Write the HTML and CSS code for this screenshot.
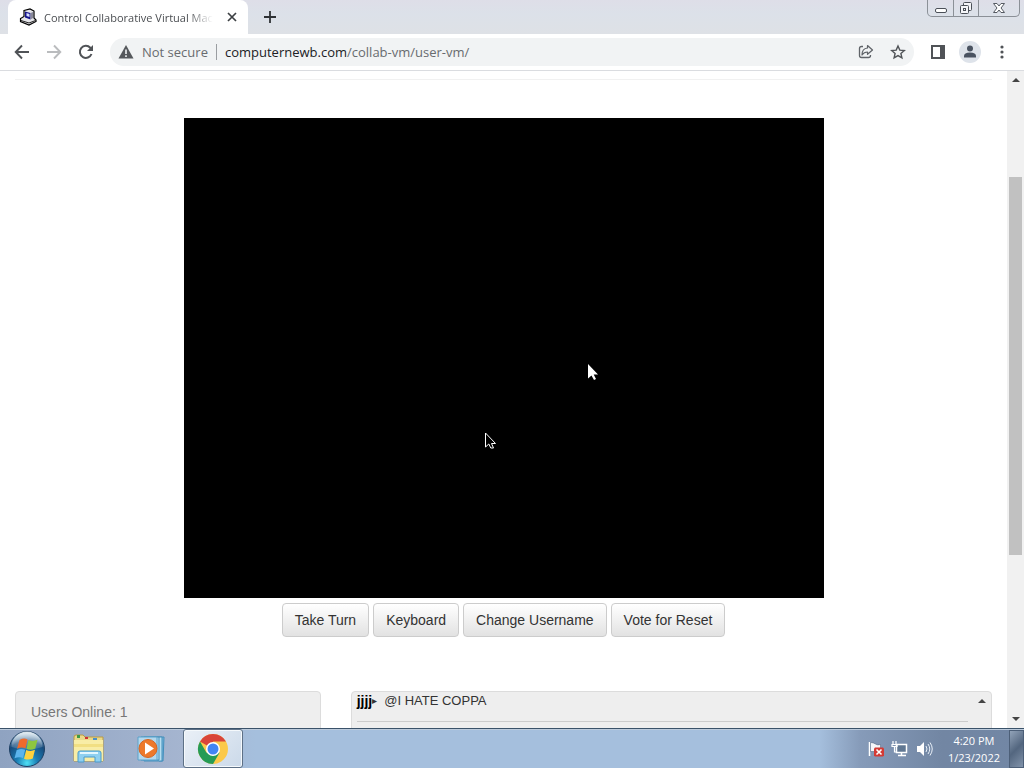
FILE: index.html
```
<!DOCTYPE html>
<html lang="en">
<head>
  <meta charset="UTF-8">
  <meta name="viewport" content="width=device-width, initial-scale=1.0">
  <title>Control Collaborative Virtual Machines</title>
  <link rel="stylesheet" href="styles.css">
</head>
<body>

  <header class="tab-strip">
    <div class="tab">
      <svg class="favicon" width="18" height="18" viewBox="0 0 18 18">
        <path d="M5 2.500 11 1l4 2v7l2 2v1.500l-7 3.500-8.500-3.500v-3l3.500-2z" fill="#e6e6ea" stroke="#000" stroke-width="1.200"/>
        <path d="M6 3.500l5.500 1.500v6.500l-5.500-2z" fill="#14148c"/>
        <path d="M7.500 5l3 1v3l-3-1z" fill="#d5dcff"/>
        <path d="M11.500 5 14 4v6l-2.500 1.500z" fill="#88889a"/>
        <path d="M2 12.500l8 2.500 6.500-2.500" fill="none" stroke="#222"/>
      </svg>
      <span class="tab-title">Control Collaborative Virtual Mac</span>
      <button class="tab-close" aria-label="Close tab">
        <svg width="10" height="10" viewBox="0 0 10 10"><path d="M1 1l8 8M9 1l-8 8" stroke="#3c4043" stroke-width="1.700"/></svg>
      </button>
    </div>
    <button class="new-tab" aria-label="New tab">
      <svg width="12" height="12" viewBox="0 0 12 12"><path d="M6 0v12M0 6h12" stroke="#2f3235" stroke-width="1.800"/></svg>
    </button>
    <div class="window-controls">
      <button class="win-btn" aria-label="Minimize">
        <svg width="14" height="14" viewBox="0 0 14 14"><rect x="1.500" y="7.500" width="11" height="4" rx="1.500" fill="#fff" stroke="#4b5058"/></svg>
      </button>
      <button class="win-btn" aria-label="Restore">
        <svg width="14" height="14" viewBox="0 0 14 14"><g fill="#f4f5f8" stroke="#4b5058"><rect x="4.500" y="1.500" width="8" height="8" rx="1"/><rect x="1.500" y="4.500" width="8" height="8" rx="1"/><rect x="4.500" y="7.500" width="2" height="2"/></g></svg>
      </button>
      <button class="win-btn win-close" aria-label="Close">
        <svg width="14" height="14" viewBox="0 0 14 14"><path d="M1.500 2.500h3.500l2 2.500 2-2.500h3.500l-3.500 4.500 3.500 4.500h-3.500l-2-2.500-2 2.500h-3.500l3.500-4.500z" fill="#fff" stroke="#555a62"/></svg>
      </button>
    </div>
  </header>

  <nav class="toolbar">
    <button class="nav-btn" aria-label="Back">
      <svg width="16" height="16" viewBox="0 0 16 16"><path d="M15 8H2M8 1.500 1.700 8 8 14.500" fill="none" stroke="#505357" stroke-width="1.900"/></svg>
    </button>
    <button class="nav-btn" aria-label="Forward">
      <svg width="16" height="16" viewBox="0 0 16 16"><path d="M1 8h13M8 1.500 14.300 8 8 14.500" fill="none" stroke="#babcbe" stroke-width="1.900"/></svg>
    </button>
    <button class="nav-btn" aria-label="Reload">
      <svg width="16" height="16" viewBox="0 0 16 16"><path d="M13.500 10A6 6 0 1 1 12.300 3.800L14 5.500" fill="none" stroke="#505357" stroke-width="2"/><path d="M15 1v6H9z" fill="#505357"/></svg>
    </button>
    <div class="address-bar">
      <svg class="warning" width="16" height="14" viewBox="0 0 16 14"><path d="M8 0l7.500 13.500H.5z" fill="#55585c"/><path d="M8 4.500V9M8 10.200V12" stroke="#f1f3f4" stroke-width="1.600"/></svg>
      <span class="security">Not secure</span>
      <span class="url"><b>computernewb.com</b>/collab-vm/user-vm/</span>
      <button class="bar-btn" aria-label="Share this page">
        <svg width="16" height="16" viewBox="0 0 16 16"><path d="M5 2.500H3.500q-2 0-2 2v7q0 2 2 2h7q2 0 2-2V11" fill="none" stroke="#5f6368" stroke-width="1.300"/><path d="M9.500 1.500l5 4.500-5 4.300V8Q6 8 4 11q0-6.500 5.500-7z" fill="none" stroke="#5f6368" stroke-width="1.200" stroke-linejoin="round"/></svg>
      </button>
      <button class="bar-btn" aria-label="Bookmark this tab">
        <svg width="16" height="16" viewBox="0 0 16 16"><path d="M8 2l1.800 4.100 4.500.4-3.400 3 1 4.400L8 11.600l-3.900 2.300 1-4.400-3.400-3 4.500-.4z" fill="none" stroke="#505357" stroke-width="1.400"/></svg>
      </button>
    </div>
    <button class="bar-btn" aria-label="Side panel">
      <svg width="16" height="16" viewBox="0 0 16 16"><path d="M1 1h14v14H1zM3 3v10h7V3z" fill="#505357" fill-rule="evenodd"/></svg>
    </button>
    <button class="bar-btn profile" aria-label="Profile">
      <svg width="22" height="22" viewBox="0 0 22 22"><circle cx="11" cy="11" r="11" fill="#dee3ea"/><circle cx="11" cy="7.500" r="3" fill="#4a5361"/><path d="M5 16.500v-1.500q0-3.500 6-3.500t6 3.500v1.500z" fill="#4a5361"/></svg>
    </button>
    <button class="bar-btn" aria-label="Menu">
      <svg width="16" height="16" viewBox="0 0 16 16" fill="#505357"><circle cx="8" cy="3" r="1.600"/><circle cx="8" cy="8" r="1.600"/><circle cx="8" cy="13" r="1.600"/></svg>
    </button>
  </nav>

  <div class="viewport">
    <main class="page">
      <hr class="divider">

      <div class="display">
        <svg class="cursor cursor-remote" width="12" height="18" viewBox="0 0 12 18"><path d="M1 0v14.500l3.500-3 2.500 4.500 2-1-2.300-4.500H11z" fill="#fff"/></svg>
        <svg class="cursor cursor-local" width="12" height="18" viewBox="0 0 12 18"><path d="M.5 1v14l3.300-3 2 4h2.700l-2-4.500h4z" fill="#000" stroke="#fff"/></svg>
      </div>

      <div class="actions">
        <button class="btn">Take Turn</button>
        <button class="btn">Keyboard</button>
        <button class="btn">Change Username</button>
        <button class="btn">Vote for Reset</button>
      </div>

      <div class="row">
        <div class="col-users">
          <section class="panel users">Users Online: 1</section>
        </div>
        <div class="col-chat">
          <section class="panel chat">
            <div class="chat-log">
              <p class="chat-message"><b>jjjj</b><span class="marker">▸</span><span>@I HATE COPPA</span></p>
            </div>
            <span class="arrow-up"></span>
          </section>
        </div>
      </div>
    </main>
    <div class="scrollbar">
      <span class="arrow-up"></span>
      <div class="track"><div class="thumb"></div></div>
      <span class="arrow-down"></span>
    </div>
  </div>

  <footer class="taskbar">
    <button class="start" aria-label="Start">
      <svg width="38" height="38" viewBox="0 0 38 38">
        <defs>
          <radialGradient id="orb" cx="50%" cy="90%" r="85%">
            <stop offset="0" stop-color="#4fe0f5"/>
            <stop offset=".35" stop-color="#1a7db4"/>
            <stop offset=".75" stop-color="#174b7c"/>
            <stop offset="1" stop-color="#8fb4cf"/>
          </radialGradient>
          <linearGradient id="gloss" x2="0" y2="1">
            <stop offset="0" stop-color="#fff" stop-opacity=".75"/>
            <stop offset="1" stop-color="#fff" stop-opacity=".1"/>
          </linearGradient>
        </defs>
        <circle cx="19" cy="19" r="17.500" fill="url(#orb)" stroke="#1d3f63"/>
        <path d="M3.500 17a15.500 15.500 0 0 1 31 0q-15.500 5-31 0z" fill="url(#gloss)"/>
        <path d="M11.500 10q4.500-2.500 8-.5l-2 9q-4-2-8.500.3z" fill="#ee6a2c"/>
        <path d="M20.500 10q4.500 2 9-.2l-2.200 8.700q-4.500 2.200-8.800.3z" fill="#8dc63f"/>
        <path d="M8.700 20q4.500-2 8.500-.3l-2.200 8.300q-4-1.800-8.500.3z" fill="#5bb4ec"/>
        <path d="M18.200 20q4.500 2 8.800-.2l-2.200 8.700q-4.300 2-8.800.2z" fill="#fdd23e"/>
      </svg>
    </button>
    <button class="task" aria-label="Windows Explorer">
      <svg width="34" height="30" viewBox="0 0 34 30">
        <path d="M2 3q0-2 2-2h7l2 2h18v24H2z" fill="#ead98a" stroke="#b99b45"/>
        <path d="M5 1h3v3H5z" fill="#3c9a45"/><path d="M13 3h3v2h-3z" fill="#c33"/><path d="M21 4h4v3h-4z" fill="#4a90c8"/>
        <path d="M2 6h29v21H2z" fill="#f8eda6"/><path d="M2 10h29v3H2z" fill="#f1df83"/>
        <path d="M6 28V19q0-2 2-2h19q2 0 2 2v9h-6v-5H12v5z" fill="#8fd0f0" stroke="#489bcc"/>
        <path d="M8 19h18" stroke="#e2f7ff" stroke-width="2"/>
      </svg>
    </button>
    <button class="task" aria-label="Windows Media Player">
      <svg width="30" height="28" viewBox="0 0 30 28">
        <path d="M8 2h20l-1 24H8z" fill="#7dbadd" stroke="#428ebb"/>
        <path d="M5 2h18v23H5zM23 2h3v24h-3" fill="#b8def0" stroke="#428ebb"/>
        <path d="M2 2h19v23H2z" fill="#b4d8ed" stroke="#5aa2cb"/>
        <circle cx="12" cy="13.500" r="9" fill="#ed792b" stroke="#d56521"/>
        <path d="M9 7.500v12l9-6z" fill="#fff"/>
      </svg>
    </button>
    <button class="task task-active" aria-label="Google Chrome">
      <svg width="32" height="32" viewBox="0 0 32 32">
        <circle cx="16" cy="16" r="15" fill="#fbc94a"/>
        <path d="M16 16 3 8.500A15 15 0 0 1 29 8.500H16z" fill="#d9453a"/>
        <path d="M3 8.500A15 15 0 0 0 16 31l6.500-11.300L16 16 9.500 19.700z" fill="#259b56"/>
        <circle cx="16" cy="16" r="7" fill="#fff"/>
        <circle cx="16" cy="16" r="5.500" fill="#4285f4"/>
      </svg>
    </button>
    <div class="tray">
      <svg width="18" height="18" viewBox="0 0 18 18">
        <path d="M2.500 2v14" stroke="#fff" stroke-width="1.500"/><path d="M3.500 2.500q3 0 5 1.500t5 .5v7H3.500z" fill="#f5f7fa" stroke="#4b5f79" stroke-width=".5"/>
        <path d="M8 7.500h8l1 1v7l-1 1H8l-1-1v-7z" fill="#d33b35"/><path d="M9.500 9.500l5 5M14.500 9.500l-5 5" stroke="#fff" stroke-width="1.600"/>
      </svg>
      <svg width="18" height="18" viewBox="0 0 18 18">
        <path d="M5.500 4.500h10v8h-10z" fill="#607792" stroke="#fff" stroke-width="1.500"/><path d="M7 15.500h8M10.500 13v2" stroke="#fff" stroke-width="1.500"/>
        <path d="M2 1v3M5 1v3M1 4.500h5v2H1zM3.500 7v5H6" fill="none" stroke="#fff" stroke-width="1.200"/>
      </svg>
      <svg width="18" height="18" viewBox="0 0 18 18">
        <path d="M2 6h3l4-4v14l-4-4H2z" fill="#fff"/><path d="M11 6q2 3 0 6M13 4q3.500 5 0 10M15 2.500q4.500 6.500 0 13" fill="none" stroke="#e9f0f8"/>
      </svg>
    </div>
    <time class="clock" datetime="2022-01-23T16:20">4:20 PM<br>1/23/2022</time>
    <button class="show-desktop" aria-label="Show desktop"></button>
  </footer>

</body>
</html>
```

FILE: styles.css
```
* {
  box-sizing: border-box;
}

body {
  margin: 0;
  height: 100vh;
  display: flex;
  flex-direction: column;
  overflow: hidden;
  background: #fff;
  font-family: "Open Sans", "Noto Sans", sans-serif;
}

button {
  padding: 0;
  border: none;
  background: none;
  font: inherit;
}

svg {
  display: block;
  flex: none;
}

/* Tab strip */
.tab-strip {
  display: flex;
  flex: none;
  height: 34px;
  padding-left: 8px;
  background: linear-gradient(#dedee8, #dce1e9 40%, #dee1e6);
}

.tab {
  display: flex;
  align-items: center;
  width: 240px;
  padding: 0 10px 0 11px;
  background: #fff;
  border-radius: 8px 8px 0 0;
}

.tab-title {
  margin: 0 auto 0 7px;
  white-space: nowrap;
  font-size: 11px;
  color: #4b4e52;
  -webkit-mask-image: linear-gradient(to right, #000 85%, transparent);
  mask-image: linear-gradient(to right, #000 85%, transparent);
}

.tab-close {
  padding: 1px;
}

.new-tab {
  padding: 0 16px;
}

.window-controls {
  display: flex;
  height: 17px;
  margin: 0 4px 0 auto;
  border: 1px solid #8b9097;
  border-top: none;
  border-radius: 0 0 5px 5px;
}

.win-btn {
  display: flex;
  align-items: center;
  justify-content: center;
  width: 25px;
}

.win-btn + .win-btn {
  border-left: 1px solid #8b9097;
}

.win-btn.win-close {
  width: 41px;
}

/* Toolbar */
.toolbar {
  display: flex;
  align-items: center;
  flex: none;
  height: 37px;
  padding: 0 14px;
  gap: 16px;
  border-bottom: 1px solid #dadce0;
}

.address-bar {
  display: flex;
  align-items: center;
  flex: 1;
  height: 28px;
  padding: 0 8px;
  gap: 16px;
  border-radius: 14px;
  background: #f1f3f4;
  font-size: 13px;
  color: #686b6f;
}

.security {
  margin-left: -8px;
  padding-right: 8px;
  border-right: 1px solid #9a9da1;
  line-height: 16px;
}

.url {
  flex: 1;
  margin-left: -8px;
}

.url b {
  font-weight: normal;
  color: #202124;
}

.profile {
  margin: 0 -3px;
}

/* Page */
.viewport {
  display: flex;
  flex: 1;
  min-height: 0;
}

.page {
  flex: 1;
  padding: 8px 15px 0;
  overflow: hidden;
  font-family: "Liberation Sans", Arial, sans-serif;
  font-size: 14px;
  line-height: 20px;
}

.divider {
  margin: 0 0 38px;
  border: none;
  border-top: 1px solid #f1f1f1;
}

.display {
  position: relative;
  max-width: 640px;
  height: 480px;
  margin: 0 auto 5px;
  background: #000;
}

.cursor {
  position: absolute;
}

.cursor-remote {
  left: 403px;
  top: 246px;
}

.cursor-local {
  left: 301px;
  top: 314px;
}

.actions {
  display: flex;
  justify-content: center;
  gap: 4px;
  margin-bottom: 54px;
}

.btn {
  padding: 6px 12px;
  border: 1px solid #ccc;
  border-radius: 4px;
  background: linear-gradient(#fff, #e2e2e2);
  color: #333;
}

.row {
  display: flex;
  margin: 0 -15px;
}

.col-users {
  width: 33.3333%;
  padding: 0 15px;
}

.col-chat {
  width: 66.6667%;
  padding: 0 15px;
}

.panel {
  height: 200px;
  border: 1px solid #dcdcdc;
  border-radius: 4px;
  background: #eee;
}

.users {
  padding: 10px 15px;
  color: #777;
}

.chat {
  display: flex;
  justify-content: space-between;
  padding: 0 5px;
}

.chat-log {
  flex: 1;
  margin-right: 10px;
}

.chat-message {
  display: flex;
  margin: 0;
  padding-bottom: 11px;
  border-bottom: 1px solid #ccc;
  font-size: 13px;
  line-height: 18px;
  color: #333;
}

.chat-message b {
  font-size: 14px;
  color: #000;
}

.marker {
  width: 12px;
  font-size: 10px;
}

.arrow-up,
.arrow-down {
  width: 0;
  height: 0;
  margin: 7px 0;
  border: 4px solid transparent;
}

.arrow-up {
  border-top: none;
  border-bottom-color: #444;
}

.arrow-down {
  border-bottom: none;
  border-top-color: #444;
}

.scrollbar {
  display: flex;
  flex-direction: column;
  align-items: center;
  flex: none;
  width: 17px;
  background: #f1f1f1;
}

.track {
  flex: 1;
  width: 13px;
  padding-top: 88px;
}

.thumb {
  height: 71%;
  background: #c1c1c1;
}

/* Taskbar */
.taskbar {
  display: flex;
  align-items: center;
  flex: none;
  height: 40px;
  padding-left: 8px;
  border-top: 1px solid #3a5269;
  background: linear-gradient(to right, #8fa3c1, #a5b5d0 18%, #a5bfdd 25%, #a5bfdd 80%, #869bb9 84%, #7286a3 92%, #7287a5);
  box-shadow: inset 0 1px #bccbdc;
}

.start {
  margin-right: 13px;
}

.task {
  display: flex;
  align-items: center;
  justify-content: center;
  width: 60px;
  height: 39px;
  margin-right: 2px;
}

.task-active {
  border: 1px solid #5d7086;
  border-radius: 3px;
  background: linear-gradient(135deg, #eaf0f7, #cbd9e9);
  box-shadow: inset 0 0 0 1px #f5f9fc;
}

.tray {
  display: flex;
  gap: 6px;
  margin-left: auto;
}

.clock {
  margin: 0 9px 0 15px;
  font-size: 11px;
  line-height: 17px;
  text-align: center;
  color: #fff;
}

.show-desktop {
  width: 15px;
  height: 38px;
  border: 1px solid #4c5f78;
  background: linear-gradient(135deg, #92a3b9, #53667f 50%, #8193aa);
}
```
